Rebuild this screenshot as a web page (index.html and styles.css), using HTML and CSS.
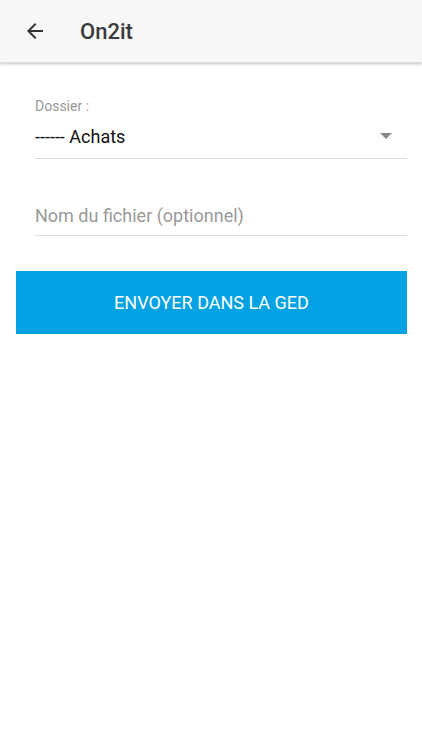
FILE: index.html
```html
<!DOCTYPE html>
<html>
<head>
<meta charset="utf-8">
<link rel="stylesheet" href="styles.css">
</head>
<body>
<header class="appbar">
  <svg class="back" width="24" height="24" viewBox="0 0 24 24"><path d="M20 11H7.83l5.59-5.59L12 4l-8 8 8 8 1.41-1.41L7.83 13H20v-2z" fill="#333"/></svg>
  <div class="title">On2it</div>
</header>
<main class="content">
  <div class="field">
    <div class="label">Dossier :</div>
    <div class="select">
      <span class="value">------ Achats</span>
      <span class="caret"></span>
    </div>
  </div>
  <div class="field input">
    <span class="placeholder">Nom du fichier (optionnel)</span>
  </div>
  <button class="btn">ENVOYER DANS LA GED</button>
</main>
</body>
</html>
```
FILE: styles.css
```css
html, body { margin: 0; padding: 0; background: #fff; font-family: Roboto, "Noto Sans", sans-serif; }
.appbar {
  height: 63px;
  background: #f7f7f7;
  display: flex;
  align-items: center;
  box-shadow: 0 1px 3px rgba(0,0,0,0.25);
  border-bottom: 1px solid #ddd;
  box-sizing: border-box;
}
.back { margin-left: 23px; }
.title { margin-left: 33px; font-size: 22px; font-weight: 500; color: #3a3a3a; }
.content { padding: 0 15px 0 16px; }
.field { margin: 0 0 0 19px; }
.label { margin-top: 35px; font-size: 14px; color: #999; line-height: 16px; }
.select {
  display: flex; align-items: center; justify-content: space-between;
  height: 44px; border-bottom: 1px solid #ddd;
}
.value { font-size: 18px; color: #111; }
.caret {
  width: 0; height: 0; margin-right: 15px;
  border-left: 6px solid transparent; border-right: 6px solid transparent;
  border-top: 6px solid #8a8a8a;
}
.input { margin-top: 37px; height: 39px; border-bottom: 1px solid #ddd; display: flex; align-items: center; }
.placeholder { font-size: 18px; color: #999; }
.btn {
  display: block; width: 100%; margin-top: 35px; height: 63px;
  background: #00a2e4; color: #fff; border: none;
  font-family: Roboto, sans-serif; font-size: 18px; letter-spacing: 0;
}
```
